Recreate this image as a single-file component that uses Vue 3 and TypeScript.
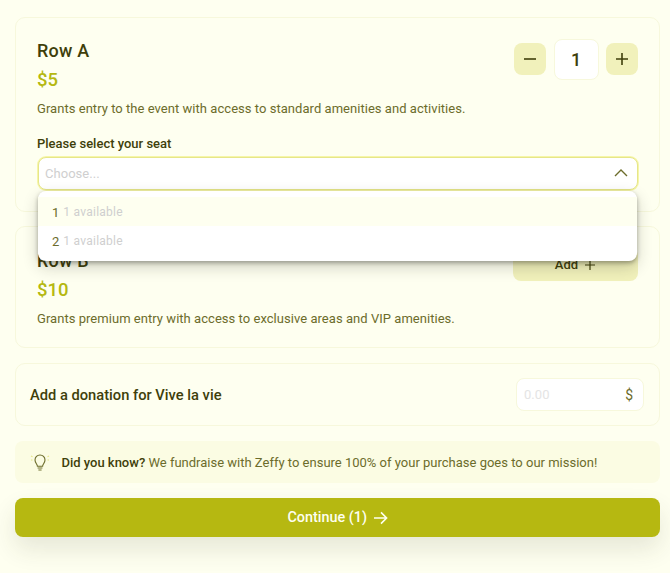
<script setup lang="ts">
const options = [
  { seat: '1', note: '1 available', active: true },
  { seat: '2', note: '1 available', active: false },
]
</script>

<template>
  <div class="page">
    <section class="card">
      <div class="head">
        <div>
          <h2 class="title">Row A</h2>
          <p class="price">$5</p>
        </div>
        <div class="stepper">
          <button class="step">
            <svg width="14" height="14" viewBox="0 0 14 14"><path d="M1 7h12" /></svg>
          </button>
          <div class="count">1</div>
          <button class="step">
            <svg width="14" height="14" viewBox="0 0 14 14"><path d="M1 7h12M7 1v12" /></svg>
          </button>
        </div>
      </div>
      <p class="desc">Grants entry to the event with access to standard amenities and activities.</p>
      <label class="label">Please select your seat</label>
      <div class="select-wrap">
        <div class="select">
          <span class="placeholder">Choose...</span>
          <svg width="14" height="8" viewBox="0 0 14 8"><path d="M1 7l6-6 6 6" /></svg>
        </div>
        <ul class="menu">
          <li v-for="o in options" :key="o.seat" class="option" :class="{ active: o.active }">
            <span class="seat">{{ o.seat }}</span>
            <span class="note">{{ o.note }}</span>
          </li>
        </ul>
      </div>
    </section>

    <section class="card second">
      <div class="head">
        <div>
          <h2 class="title">Row B</h2>
          <p class="price">$10</p>
        </div>
        <button class="add">
          Add
          <svg width="12" height="12" viewBox="0 0 12 12"><path d="M1 6h10M6 1v10" /></svg>
        </button>
      </div>
      <p class="desc">Grants premium entry with access to exclusive areas and VIP amenities.</p>
    </section>

    <section class="donation">
      <span class="donation-label">Add a donation for Vive la vie</span>
      <div class="amount">
        <span class="amount-value">0.00</span>
        <span class="currency">$</span>
      </div>
    </section>

    <div class="tip">
      <svg class="bulb" width="20" height="20" viewBox="0 0 20 20">
        <path d="M7.4 14.2c0-2-2.4-3.2-2.4-6.2a5 5 0 0 1 10 0c0 3-2.4 4.2-2.4 6.2z" />
        <path d="M7.6 16h4.8M8.4 18h3.2" />
        <path class="rays" d="M1 4l1.5.8M1 8h1.5M19 4l-1.5.8M19 8h-1.5" />
      </svg>
      <p><strong>Did you know?</strong> We fundraise with Zeffy to ensure 100% of your purchase goes to our mission!</p>
    </div>

    <button class="continue">
      Continue (1)
      <svg width="15" height="14" viewBox="0 0 15 14"><path d="M1 7h12.5M8 1.4L13.6 7 8 12.6" /></svg>
    </button>
  </div>
</template>

<style>
html, body {
  background: #fefff0;
}
</style>

<style scoped>
.page {
  box-sizing: border-box;
  width: 670px;
  height: 573px;
  padding: 16.7px 10px 0 15.4px;
  display: flex;
  flex-direction: column;
  gap: 14.8px;
  overflow: hidden;
  font-family: Roboto, sans-serif;
  color: #6c6c2b;
}
h2, p, ul {
  margin: 0;
  padding: 0;
}
button {
  font-family: inherit;
  border: 0;
  cursor: pointer;
}
svg path {
  fill: none;
  stroke: currentColor;
}
.card {
  box-sizing: border-box;
  height: 195px;
  padding: 21px 21px 0 20.6px;
  border: 1px solid #f7f8dc;
  border-radius: 10px;
}
.card.second {
  height: 122px;
  padding-top: 22px;
}
.head {
  display: flex;
  justify-content: space-between;
  align-items: flex-start;
  height: 51px;
}
.title {
  font-size: 18px;
  line-height: 24px;
  font-weight: 500;
  letter-spacing: 0.2px;
  color: #3f3f0b;
}
.price {
  margin-top: 6px;
  font-size: 18.5px;
  line-height: 22px;
  font-weight: 500;
  color: #b5b811;
}
.stepper {
  display: flex;
  align-items: center;
  gap: 7.5px;
}
.step {
  width: 32px;
  height: 32px;
  padding: 0;
  border-radius: 8px;
  background: #f1f1bb;
  color: #3f3f0b;
  display: flex;
  align-items: center;
  justify-content: center;
}
.step path {
  stroke-width: 1.6;
}
.count {
  width: 45px;
  height: 41px;
  box-sizing: border-box;
  border: 1px solid #f7f8dc;
  border-radius: 8px;
  background: #fff;
  display: flex;
  align-items: center;
  justify-content: center;
  font-size: 18px;
  font-weight: 500;
  color: #3f3f0b;
}
.desc {
  margin-top: 9px;
  font-size: 13px;
  line-height: 20px;
  letter-spacing: 0.04px;
}
.label {
  display: block;
  margin-top: 16px;
  font-size: 13px;
  line-height: 18px;
  font-weight: 500;
  color: #3f3f0b;
}
.select-wrap {
  position: relative;
  margin: 4px 0 0 1px;
}
.select {
  box-sizing: border-box;
  height: 33px;
  padding: 0 9px 0 6px;
  display: flex;
  align-items: center;
  justify-content: space-between;
  background: #fff;
  border: 1px solid #e6e68a;
  border-radius: 8px;
  box-shadow: 0 0 0 1px #f6f6a8;
  color: #6c6c2b;
}
.select path {
  stroke-width: 1.4;
}
.placeholder {
  font-size: 13px;
  letter-spacing: 0.04px;
  color: #cfcfcf;
}
.menu {
  position: absolute;
  z-index: 2;
  top: 34.7px;
  left: 0;
  right: 1px;
  height: 70px;
  padding-top: 5.5px;
  box-sizing: border-box;
  list-style: none;
  background: #fff;
  border-radius: 8px;
  box-shadow: 0 2px 4px rgba(30, 30, 20, 0.35), 0 6px 16px rgba(30, 30, 20, 0.2);
}
.option {
  box-sizing: border-box;
  height: 29px;
  padding: 1.5px 0 0 14px;
  display: flex;
  align-items: center;
  gap: 4px;
  font-size: 13px;
}
.option.active {
  background: #fefff0;
}
.seat {
  color: #6c6c2b;
}
.note {
  font-size: 12px;
  letter-spacing: 0.25px;
  color: #cfcfcf;
}
.add {
  width: 125px;
  height: 33px;
  margin-top: -1px;
  padding: 0;
  flex: none;
  border-radius: 8px;
  background: #f1f1bb;
  color: #3f3f0b;
  font-size: 13px;
  font-weight: 500;
  display: flex;
  align-items: center;
  justify-content: center;
  gap: 6px;
}
.add path {
  stroke-width: 1.2;
}
.donation {
  box-sizing: border-box;
  height: 63px;
  padding: 0 15px 0 13.6px;
  border: 1px solid #f7f8dc;
  border-radius: 10px;
  display: flex;
  align-items: center;
  justify-content: space-between;
}
.donation-label {
  font-size: 14.7px;
  font-weight: 500;
  color: #3f3f0b;
}
.amount {
  box-sizing: border-box;
  width: 128px;
  height: 33px;
  padding: 0 10px 0 7px;
  border: 1px solid #f7f8dc;
  border-radius: 8px;
  background: #fff;
  display: flex;
  align-items: center;
  justify-content: space-between;
  font-size: 13px;
}
.amount-value {
  letter-spacing: 0.04px;
  color: #e4e4e4;
}
.currency {
  font-size: 14px;
  color: #6c6c2b;
}
.tip {
  box-sizing: border-box;
  height: 42.4px;
  flex: none;
  padding: 0 15px;
  border-radius: 8px;
  background: #fbfce3;
  display: flex;
  align-items: center;
  gap: 11px;
  font-size: 13px;
}
.tip strong {
  font-weight: 500;
  color: #3f3f0b;
}
.bulb {
  flex: none;
  color: #6c6c2b;
}
.bulb path {
  stroke-width: 1.1;
}
.bulb .rays {
  stroke: #e6e68a;
}
.continue {
  height: 39px;
  flex: none;
  padding: 0;
  border-radius: 8px;
  background: #b6b811;
  color: #fefff0;
  font-size: 14.4px;
  font-weight: 500;
  display: flex;
  align-items: center;
  justify-content: center;
  gap: 6px;
  box-shadow: 0 12px 24px rgba(60, 60, 30, 0.12);
}
.continue path {
  stroke-width: 1.6;
}
</style>
